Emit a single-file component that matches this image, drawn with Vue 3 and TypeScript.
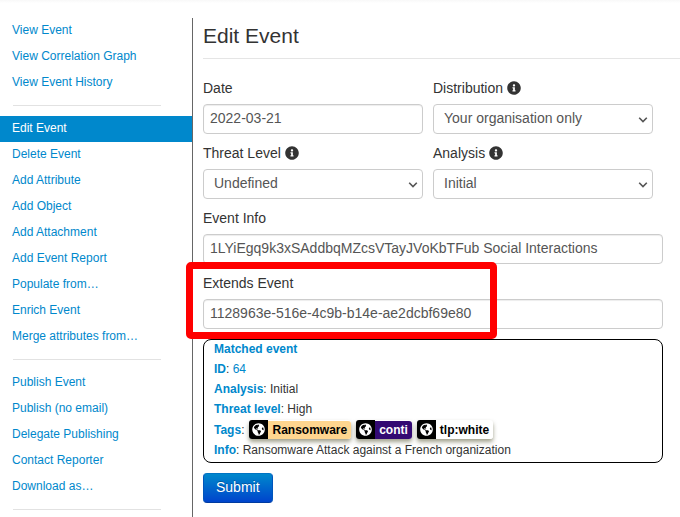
<script setup lang="ts">
import { ref } from 'vue'

interface SelectField {
  id: string
  label: string
  value: string
  options: string[]
}

interface Tag {
  name: string
  tone: string
}

const menuGroups: string[][] = [
  ['View Event', 'View Correlation Graph', 'View Event History'],
  [
    'Edit Event',
    'Delete Event',
    'Add Attribute',
    'Add Object',
    'Add Attachment',
    'Add Event Report',
    'Populate from…',
    'Enrich Event',
    'Merge attributes from…',
  ],
  ['Publish Event', 'Publish (no email)', 'Delegate Publishing', 'Contact Reporter', 'Download as…'],
]
const activeItem = ref('Edit Event')

const date = ref('2022-03-21')
const info = ref('1LYiEgq9k3xSAddbqMZcsVTayJVoKbTFub Social Interactions')
const extendsUuid = ref('1128963e-516e-4c9b-b14e-ae2dcbf69e80')

const selects = ref<SelectField[]>([
  { id: 'distribution', label: 'Distribution', value: 'Your organisation only', options: ['Your organisation only'] },
  { id: 'threat', label: 'Threat Level', value: 'Undefined', options: ['Undefined'] },
  { id: 'analysis', label: 'Analysis', value: 'Initial', options: ['Initial'] },
])

const tags: Tag[] = [
  { name: 'Ransomware', tone: 'amber' },
  { name: 'conti', tone: 'purple' },
  { name: 'tlp:white', tone: 'white' },
]
</script>

<template>
  <div class="page">
    <nav class="sidebar">
      <template v-for="(group, index) in menuGroups" :key="index">
        <ul class="menu">
          <li v-for="item in group" :key="item">
            <a href="#" :class="['menu-link', { active: item === activeItem }]" @click.prevent="activeItem = item">{{ item }}</a>
          </li>
        </ul>
        <hr class="menu-divider" />
      </template>
    </nav>

    <main class="content">
      <h1 class="title">Edit Event</h1>
      <form class="form" @submit.prevent>
        <div class="pair">
          <div class="field">
            <label class="label" for="date">Date</label>
            <input id="date" v-model="date" class="control" type="text" />
          </div>
          <div v-for="field in selects" :key="field.id" class="field">
            <label class="label" :for="field.id">
              {{ field.label }}
              <svg class="info-icon" viewBox="0 0 512 512" aria-hidden="true">
                <path
                  d="M256 8C119.043 8 8 119.083 8 256c0 136.997 111.043 248 248 248s248-111.003 248-248C504 119.083 392.957 8 256 8zm0 110c23.196 0 42 18.804 42 42s-18.804 42-42 42-42-18.804-42-42 18.804-42 42-42zm56 254c0 6.627-5.373 12-12 12h-88c-6.627 0-12-5.373-12-12v-24c0-6.627 5.373-12 12-12h12v-64h-12c-6.627 0-12-5.373-12-12v-24c0-6.627 5.373-12 12-12h64c6.627 0 12 5.373 12 12v100h12c6.627 0 12 5.373 12 12v24z"
                />
              </svg>
            </label>
            <div class="select-wrap">
              <select :id="field.id" v-model="field.value" class="control select">
                <option v-for="option in field.options" :key="option">{{ option }}</option>
              </select>
              <svg class="chevron" viewBox="0 0 10 6" aria-hidden="true">
                <path d="M1.2 0.8L5 4.6L8.8 0.8" />
              </svg>
            </div>
          </div>
        </div>

        <div class="field">
          <label class="label" for="info">Event Info</label>
          <input id="info" v-model="info" class="control" type="text" />
        </div>

        <div class="field highlighted">
          <label class="label" for="extends">Extends Event</label>
          <input id="extends" v-model="extendsUuid" class="control" type="text" />
        </div>

        <section class="matched">
          <div class="line"><b>Matched event</b></div>
          <div class="line"><b>ID</b>: <a href="#" class="id-link">64</a></div>
          <div class="line"><b>Analysis</b>: Initial</div>
          <div class="line"><b>Threat level</b>: High</div>
          <div class="line tag-line">
            <span><b>Tags</b>:</span>
            <span v-for="tag in tags" :key="tag.name" class="tag">
              <span class="tag-icon">
                <svg viewBox="0 0 496 512" aria-hidden="true">
                  <path
                    d="M248 8C111.03 8 0 119.03 0 256s111.03 248 248 248 248-111.03 248-248S384.97 8 248 8zm82.29 357.6c-3.9 3.88-7.99 7.95-11.31 11.28-2.99 3-5.1 6.7-6.17 10.71-1.51 5.66-2.73 11.38-4.77 16.87l-17.39 46.85c-13.76 3-28 4.69-42.65 4.69v-27.38c1.69-12.62-7.64-36.26-22.63-51.25-6-6-9.37-14.14-9.37-22.63v-32.01c0-11.64-6.27-22.34-16.46-27.97-14.37-7.95-34.81-19.06-48.81-26.11-11.48-5.78-22.1-13.14-31.65-21.75l-.8-.72a114.792 114.792 0 0 1-18.06-20.74c-9.38-13.77-24.66-36.42-34.59-51.14 20.47-45.5 57.36-82.04 103.2-101.89l24.01 12.01C203.48 89.74 216 82.01 216 70.11v-11.3c7.99-1.29 16.12-2.11 24.39-2.42l28.3 28.3c6.25 6.25 6.25 16.38 0 22.63L264 112l-10.34 10.34c-3.12 3.12-3.12 8.19 0 11.31l4.69 4.69c3.12 3.12 3.12 8.19 0 11.31l-8 8a8.008 8.008 0 0 1-5.66 2.34h-8.99c-2.08 0-4.08.81-5.58 2.27l-9.92 9.65a8.008 8.008 0 0 0-1.58 9.31l15.59 31.19c2.66 5.32-1.21 11.58-7.15 11.58h-5.64c-1.93 0-3.79-.7-5.24-1.96l-9.28-8.06a16.017 16.017 0 0 0-15.55-3.1l-31.17 10.39a11.95 11.95 0 0 0-8.17 11.34c0 4.53 2.56 8.66 6.61 10.69l11.08 5.54c9.41 4.71 19.79 7.16 30.31 7.16s22.59 27.29 32 32h66.75c8.49 0 16.62 3.37 22.63 9.37l13.69 13.69a30.503 30.503 0 0 1 8.93 21.57 46.536 46.536 0 0 1-13.72 32.98zM417 274.25c-5.79-1.45-10.84-5-14.15-9.97l-17.98-26.97a23.97 23.97 0 0 1 0-26.62l19.59-29.38c2.32-3.47 5.5-6.29 9.24-8.15l12.98-6.49C440.2 193.59 448 223.87 448 256c0 8.67-.74 17.16-1.82 25.54L417 274.25z"
                  />
                </svg>
              </span>
              <span :class="['tag-name', tag.tone]">{{ tag.name }}</span>
            </span>
          </div>
          <div class="line"><b>Info</b>: Ransomware Attack against a French organization</div>
        </section>

        <button class="submit" type="submit">Submit</button>
      </form>
    </main>
  </div>
</template>

<style>
body {
  background: #fff;
}
</style>

<style scoped>
.page {
  box-sizing: border-box;
  display: flex;
  min-height: 100vh;
  padding-top: 18px;
  background: linear-gradient(#f8f8f8, #fff 3px);
  color: #333;
  font-family: 'Liberation Sans', Arial, sans-serif;
  font-size: 14px;
  line-height: 20px;
}

.sidebar {
  flex: 0 0 192px;
  border-right: 1px solid #666;
}

.menu {
  margin: 0;
  padding: 0;
  list-style: none;
}

.menu-link {
  display: block;
  padding: 2px 12px 4px;
  color: #08c;
  font-size: 12px;
  text-decoration: none;
}

.menu-link.active {
  background: #08c;
  color: #fff;
}

.menu-divider {
  height: 1px;
  margin: 9px 31px 10px 13px;
  border: 0;
  background: #e2e2e2;
}

.menu-divider:last-child {
  margin-bottom: 0;
}

.content {
  flex: 1;
  min-width: 0;
  padding-left: 10px;
}

.title {
  margin: 0 0 19px;
  padding-bottom: 5px;
  border-bottom: 1px solid #e5e5e5;
  font-size: 21px;
  font-weight: 400;
  line-height: 35px;
}

.form {
  box-sizing: border-box;
  width: 100%;
  max-width: 460px;
}

.pair {
  display: grid;
  grid-template-columns: 1fr 1fr;
  column-gap: 10px;
  padding-right: 10px;
}

.field {
  padding-bottom: 9px;
}

.label {
  display: flex;
  align-items: center;
  gap: 4px;
  margin-bottom: 6px;
}

.info-icon {
  width: 14px;
  height: 14px;
  fill: #333;
}

.control {
  box-sizing: border-box;
  display: block;
  width: 100%;
  height: 30px;
  padding: 4px 6px 6px;
  border: 1px solid #ccc;
  border-radius: 4px;
  background: #fff;
  box-shadow: inset 0 1px 1px rgba(0, 0, 0, 0.075);
  color: #555;
  font-family: inherit;
  font-size: 14px;
  line-height: 20px;
}

.select-wrap {
  position: relative;
}

.select {
  padding: 3px 24px 5px 10px;
  box-shadow: none;
  appearance: none;
}

.chevron {
  position: absolute;
  top: 13px;
  right: 5px;
  width: 10px;
  height: 6px;
  fill: none;
  stroke: #555;
  stroke-width: 1.6;
  pointer-events: none;
}

.highlighted {
  position: relative;
}

.highlighted::after {
  content: '';
  position: absolute;
  top: -11px;
  left: -17px;
  box-sizing: border-box;
  width: 311px;
  height: 77px;
  border: 7px solid #f00;
  border-radius: 5px;
  pointer-events: none;
}

.matched {
  margin-top: 1px;
  padding: 0 10px 2px;
  border: 1px solid #000;
  border-radius: 8px;
  font-size: 12px;
}

.line {
  line-height: 20px;
}

.line:first-child {
  line-height: 19px;
}

.matched b,
.id-link {
  color: #08c;
  text-decoration: none;
}

.tag-line {
  display: flex;
  align-items: center;
  gap: 5px;
  height: 21px;
}

.tag {
  display: flex;
  align-items: center;
  border-radius: 3px;
  box-shadow: 0 3px 4px rgba(70, 70, 30, 0.5);
  font-weight: 700;
}

.tag-icon {
  display: flex;
  align-items: center;
  justify-content: center;
  width: 19px;
  height: 19px;
  border-radius: 3px 0 0 3px;
  background: #000;
}

.tag-icon svg {
  width: 13px;
  height: 13px;
  fill: #fff;
}

.tag-name {
  padding: 0 4px;
  border-radius: 0 3px 3px 0;
  line-height: 18px;
}

.amber {
  background: #ffd68f;
  color: #000;
}

.purple {
  background: #330a73;
  color: #fff;
}

.white {
  background: #fff;
  color: #000;
}

.submit {
  display: block;
  height: 30px;
  margin-top: 10px;
  padding: 3px 12px 5px;
  border: 1px solid #04b;
  border-color: #0074c4 #0055bb #003ba0;
  border-radius: 4px;
  background: linear-gradient(#08c, #04c);
  color: #fff;
  font-family: inherit;
  font-size: 14px;
  line-height: 20px;
  text-shadow: 0 -1px 0 rgba(0, 0, 0, 0.25);
}
</style>
